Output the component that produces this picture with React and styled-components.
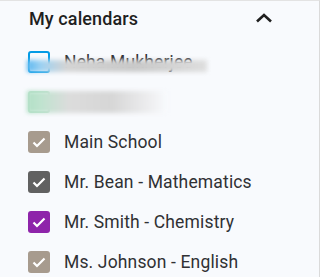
import styled, { createGlobalStyle } from "styled-components";

const GlobalStyle = createGlobalStyle`
  html, body {
    margin: 0;
    padding: 0;
    background: #f8fafd;
  }
`;

const calendars = [
  { name: "Neha Mukherjee", color: "#039be5", checked: false, blur: "neha" },
  { name: "", color: "#b5e0c8", checked: false, blur: "green" },
  { name: "Main School", color: "#a79b8e", checked: true },
  { name: "Mr. Bean - Mathematics", color: "#616161", checked: true },
  { name: "Mr. Smith - Chemistry", color: "#8e24aa", checked: true },
  { name: "Ms. Johnson - English", color: "#a79b8e", checked: true },
];

const blurs = {
  neha: {
    top: 18,
    left: -1,
    width: 180,
    height: 12,
    bg: "linear-gradient(90deg, #5db8f0 0%, #9fd2f2 8%, #d4d4d4 22%, #c9c9c9 60%, #dedede 100%)",
  },
  green: {
    top: 9,
    left: -1,
    width: 140,
    height: 22,
    bg: "linear-gradient(90deg, #b2e0c6 0%, #bfe3cf 10%, #dcdcdc 30%, #d6d6d6 60%, #f0f0f2 90%, #f8fafd 100%)",
  },
};

export default function App() {
  return (
    <>
      <GlobalStyle />
      <Panel>
        <Header>
          <Title>My calendars</Title>
          <Chevron width="18" height="10" viewBox="0 0 18 10">
            <path d="M2 8.5 L9 2 L16 8.5" fill="none" stroke="#1f1f1f" strokeWidth="2.6" />
          </Chevron>
        </Header>
        <List>
          {calendars.map((c, i) => (
            <Row key={i}>
              <Box $color={c.color} $checked={c.checked}>
                {c.checked && (
                  <svg width="14" height="11" viewBox="0 0 14 11">
                    <path d="M1.5 5.5 L5 9 L12.5 1.5" fill="none" stroke="#fff" strokeWidth="2.2" />
                  </svg>
                )}
              </Box>
              <Label>{c.name}</Label>
              {c.blur && (
                <Smudge
                  style={{
                    top: blurs[c.blur].top,
                    left: blurs[c.blur].left,
                    width: blurs[c.blur].width,
                    height: blurs[c.blur].height,
                    background: blurs[c.blur].bg,
                  }}
                />
              )}
            </Row>
          ))}
        </List>
      </Panel>
    </>
  );
}

const Panel = styled.div`
  width: 319px;
  height: 276px;
  border-top: 1px solid #e3e3e3;
  border-right: 1px solid #dadada;
  background: #f8fafd;
  overflow: hidden;
  font-family: Roboto, "Noto Sans", sans-serif;
  color: #1f1f1f;
`;

const Header = styled.div`
  display: flex;
  align-items: center;
  justify-content: space-between;
  height: 34px;
  padding: 0 46px 0 29px;
`;

const Title = styled.span`
  font-size: 18px;
  font-weight: 500;
  letter-spacing: 0.1px;
`;

const Chevron = styled.svg`
  display: block;
`;

const List = styled.div`
  display: flex;
  flex-direction: column;
  padding-top: 7px;
`;

const Row = styled.div`
  position: relative;
  display: flex;
  align-items: center;
  height: 40px;
  padding-left: 28px;
`;

const Box = styled.div`
  box-sizing: border-box;
  width: 22px;
  height: 22px;
  border-radius: 3px;
  display: flex;
  align-items: center;
  justify-content: center;
  background: ${(p) => (p.$checked ? p.$color : "transparent")};
  border: ${(p) => (p.$checked ? "none" : `2.5px solid ${p.$color}`)};
`;

const Label = styled.span`
  margin-left: 14px;
  font-size: 17.5px;
  letter-spacing: 0.15px;
  color: #303134;
  white-space: nowrap;
`;

const Smudge = styled.div`
  position: absolute;
  margin-left: 28px;
  filter: blur(2px);
`;
